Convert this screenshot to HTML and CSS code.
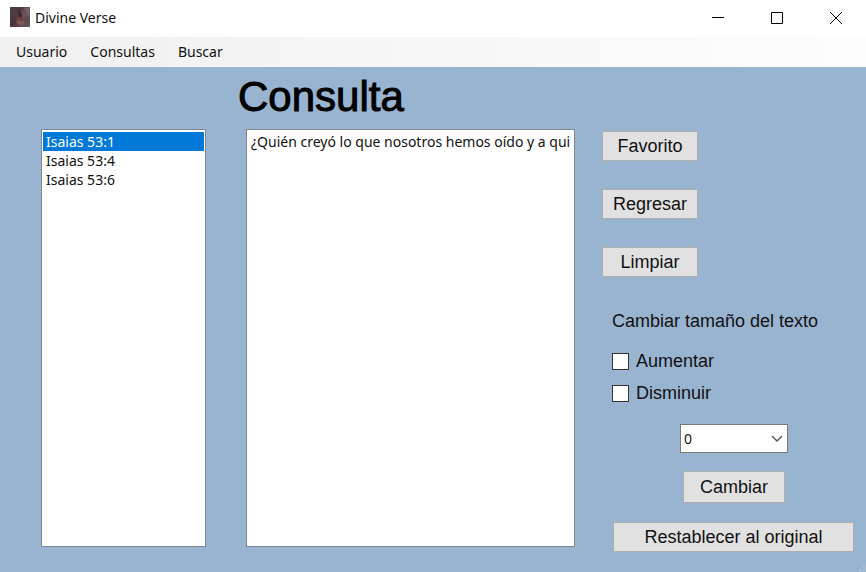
FILE: index.html
```html
<!DOCTYPE html>
<html lang="es">
<head>
<meta charset="utf-8">
<title>Divine Verse</title>
<link rel="stylesheet" href="styles.css">
</head>
<body>
<header class="titlebar">
  <svg class="app-icon" viewBox="0 0 20 20" aria-hidden="true">
    <defs>
      <linearGradient id="base" x1="0" y1="0" x2="1" y2="1">
        <stop offset="0" stop-color="#4b4148"/>
        <stop offset=".5" stop-color="#4a353b"/>
        <stop offset="1" stop-color="#6b5b66"/>
      </linearGradient>
      <filter id="soft"><feGaussianBlur stdDeviation=".8"/></filter>
      <clipPath id="frame"><path d="M0 0h20v20H0z"/></clipPath>
    </defs>
    <path d="M0 0h20v20H0z" fill="url(#base)"/>
    <g filter="url(#soft)" clip-path="url(#frame)">
      <path d="M14 0l6 0v12l-4-5z" fill="#75666f"/>
      <path d="M7 5l5-3 3 6-1 7-5 1-3-4z" fill="#6a4346"/>
      <path d="M8 4l3-1 2 5-2 3-3-1z" fill="#33252d"/>
      <path d="M7 14l3 3 5-2" fill="none" stroke="#b37863" stroke-width="1.3"/>
      <path d="M12 3l3 8" stroke="#a48485" stroke-width="1"/>
    </g>
  </svg>
  <span class="app-name">Divine Verse</span>
  <div class="window-buttons">
    <button type="button" aria-label="Minimizar"><svg viewBox="0 0 12 12"><path d="M0 5.5h12"/></svg></button>
    <button type="button" aria-label="Maximizar"><svg viewBox="0 0 12 12"><path d="M.5.5h11v11H.5z"/></svg></button>
    <button type="button" aria-label="Cerrar"><svg viewBox="0 0 12 12"><path d="M0 0l12 12M12 0L0 12"/></svg></button>
  </div>
</header>
<nav class="menubar">
  <button type="button">Usuario</button>
  <button type="button">Consultas</button>
  <button type="button">Buscar</button>
</nav>
<main class="form">
  <h1>Consulta</h1>
  <div class="columns">
    <select class="listbox" size="20" aria-label="Versículos">
      <option selected>Isaias 53:1</option>
      <option>Isaias 53:4</option>
      <option>Isaias 53:6</option>
    </select>
    <select class="listbox" size="20" aria-label="Texto del versículo">
      <option>¿Quién creyó lo que nosotros hemos oído y a qui</option>
    </select>
    <div class="side">
      <div class="actions">
        <button class="btn" type="button">Favorito</button>
        <button class="btn" type="button">Regresar</button>
        <button class="btn" type="button">Limpiar</button>
      </div>
      <fieldset class="sizing">
        <legend>Cambiar tamaño del texto</legend>
        <label class="check"><input type="checkbox">Aumentar</label>
        <label class="check"><input type="checkbox">Disminuir</label>
      </fieldset>
      <div class="apply">
        <div class="combo">
          <select aria-label="Tamaño"><option>0</option></select>
          <svg viewBox="0 0 12 7" aria-hidden="true"><path d="M1 1l5 5 5-5"/></svg>
        </div>
        <button class="btn" type="button">Cambiar</button>
      </div>
      <button class="btn reset" type="button">Restablecer al original</button>
    </div>
  </div>
  <svg class="grip" viewBox="0 0 8 8" aria-hidden="true"><path d="M5 1h2v2H5zM5 5h2v2H5zM1 5h2v2H1z"/></svg>
</main>
</body>
</html>
```
FILE: styles.css
```css
* {
  box-sizing: border-box;
}

body {
  margin: 0;
  min-height: 100vh;
  display: flex;
  flex-direction: column;
  background: #fff;
  color: #111;
  font: 14px/20px "Noto Sans", sans-serif;
}

button,
select {
  font: inherit;
  color: inherit;
}

.titlebar {
  display: flex;
  align-items: center;
  height: 37px;
  padding: 0 1px 0 10px;
  gap: 5px;
}

.app-icon {
  width: 20px;
  height: 20px;
  margin-bottom: 3px;
}

.app-name {
  margin-bottom: 2px;
}

.window-buttons {
  display: flex;
  align-self: stretch;
  margin-left: auto;
}

.window-buttons button {
  display: grid;
  place-items: center;
  width: 59px;
  padding: 0 0 2px;
  border: 0;
  background: none;
}

.window-buttons svg {
  width: 12px;
  height: 12px;
  fill: none;
  stroke: #000;
}

.menubar {
  display: flex;
  align-items: center;
  height: 30px;
  padding-left: 16px;
  gap: 23px;
  background: linear-gradient(90deg, #f0f0f0, #fdfdfd);
}

.menubar button {
  padding: 0;
  border: 0;
  background: none;
}

.form {
  position: relative;
  flex: 1;
  display: flex;
  flex-direction: column;
  padding: 7px 12px 18px 41px;
  background: #99b4d1;
  font-family: "Liberation Sans", Arial, sans-serif;
  font-size: 18px;
}

h1 {
  margin: 0 0 9px 197px;
  color: #000;
  font-size: 42px;
  font-weight: 400;
  line-height: 46px;
  -webkit-text-stroke: 1px #000;
}

.columns {
  flex: 1;
  display: grid;
  grid-template-columns: 165fr 329fr 239px;
  column-gap: 40px;
}

.listbox {
  width: 100%;
  min-width: 0;
  margin-bottom: 7px;
  padding: 2px 1px;
  border: 1px solid #828790;
  border-radius: 0;
  outline: 0;
  background: #fff;
  font: 14px/19px "Noto Sans", sans-serif;
  overflow: hidden;
}

.listbox option {
  min-height: 19px;
  padding: 0 3px;
  line-height: 19px;
}

.listbox option:checked {
  background: #0078d7 linear-gradient(#0078d7, #0078d7);
  color: #fff;
}

.side {
  margin-left: -13px;
}

.actions {
  display: flex;
  flex-direction: column;
  align-items: flex-start;
  gap: 28px;
  padding-top: 2px;
}

.btn {
  height: 30px;
  padding: 0;
  border: 1px solid #adadad;
  background: #e1e1e1;
}

.actions .btn {
  width: 96px;
}

.sizing {
  margin: 34px 0 0 10px;
  padding: 0;
  border: 0;
}

.sizing legend {
  padding: 0;
  margin-bottom: 20px;
}

.check {
  display: flex;
  align-items: center;
  gap: 7px;
  margin-bottom: 12px;
}

.check input {
  appearance: none;
  width: 17px;
  height: 17px;
  margin: 0;
  border: 1px solid #333;
  background: #fff;
}

.apply {
  display: flex;
  flex-direction: column;
  align-items: center;
  gap: 18px;
  margin: 21px 0 19px;
  padding-left: 12px;
}

.sizing .check:last-child {
  margin-bottom: 0;
}

.combo {
  position: relative;
}

.combo select {
  display: block;
  appearance: none;
  width: 108px;
  height: 29px;
  padding: 0 3px;
  border: 1px solid #7a7a7a;
  border-radius: 0;
  background: #fff;
  font: 14px/20px "Noto Sans", sans-serif;
}

.combo svg {
  position: absolute;
  right: 5px;
  top: 11px;
  width: 12px;
  height: 7px;
  fill: none;
  stroke: #555;
  stroke-width: 1.4;
  pointer-events: none;
}

.apply .btn {
  width: 102px;
  height: 32px;
}

.reset {
  display: block;
  width: 241px;
  margin-left: auto;
}

.grip {
  position: absolute;
  right: 0;
  bottom: 0;
  width: 8px;
  height: 8px;
  fill: #b8c4d4;
}
```
